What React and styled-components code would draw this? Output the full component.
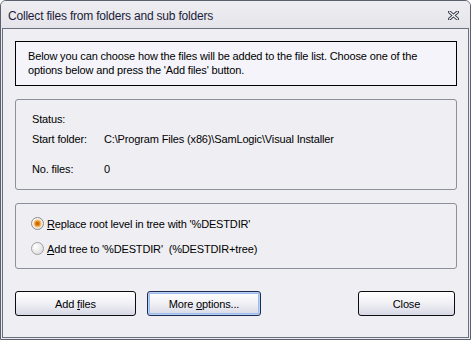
import React from 'react';
import styled, { createGlobalStyle, css } from 'styled-components';

const GlobalStyle = createGlobalStyle`
  html, body { margin: 0; padding: 0; background: #ffffff; }
  body { font-family: "Liberation Sans", Arial, sans-serif; }
  * { box-sizing: border-box; }
`;

const uiFont = css`
  font-family: "Liberation Sans", Arial, sans-serif;
  font-size: 11px;
  letter-spacing: -0.15px;
  color: #000;
`;

// --- Window frame --- //
const Window = styled.div`
  width: 471px;
  height: 340px;
  border: 1px solid #5a606c;
  border-radius: 6px 6px 0 0;
  background: #e8e8ee;
  display: flex;
  flex-direction: column;
  overflow: hidden;
`;

const TitleBar = styled.div`
  height: 27px;
  flex: none;
  display: flex;
  align-items: center;
  justify-content: space-between;
  padding: 0 11px 0 7px;
  background: linear-gradient(#eeeef2, #e4e4ea);
`;

const Title = styled.span`
  font-family: "Liberation Sans", Arial, sans-serif;
  font-size: 12px;
  letter-spacing: -0.2px;
  color: #1c1c3a;
  padding-top: 2px;
`;

const CloseGlyph = styled.svg`
  display: block;
  margin-top: 1px;
`;

const Client = styled.div`
  flex: 1;
  margin: 0 1px 1px 1px;
  border: 1px solid #6a707c;
  background: #efeef3;
  display: flex;
  flex-direction: column;
  padding: 12px 11px 0 12px;
`;

// --- Info box --- //
const InfoBox = styled.div`
  ${uiFont}
  height: 45px;
  border: 1px solid #000;
  background: #f4f4fa;
  padding: 7px 12px 0 12px;
  line-height: 14px;
`;

// --- Group boxes --- //
const Group = styled.div`
  height: ${p => p.$h}px;
  margin-top: 13px;
  border: 1px solid #8c909a;
  border-radius: 3px;
  padding: ${p => p.$pad};
  display: flex;
  flex-direction: column;
`;

const StatusRow = styled.div`
  ${uiFont}
  display: grid;
  grid-template-columns: 72px 1fr;
  line-height: 13px;
  margin-top: ${p => p.$top || 0}px;
`;

const RadioRow = styled.label`
  ${uiFont}
  display: flex;
  align-items: center;
  gap: 3px;
  height: 17px;
  margin-top: ${p => p.$top || 0}px;
`;

const Acc = styled.span`
  text-decoration: underline;
  text-underline-offset: 1px;
`;

// --- Buttons --- //
const ButtonBar = styled.div`
  display: flex;
  margin-top: 22px;
  padding-right: 2px;
`;

const Button = styled.button`
  ${uiFont}
  width: ${p => p.$w}px;
  height: 25px;
  margin-left: ${p => p.$ml || 0}px;
  border: 1px solid #0c0c10;
  border-radius: 3px;
  background: linear-gradient(#ffffff 0%, #f2f2f6 45%, #d8d8e6 100%);
  padding: 0;
  cursor: pointer;
  ${p => p.$focus && css`
    border-color: #1e2a50;
    box-shadow: inset 0 0 0 1px #b8d0f4, inset 0 0 0 2px #9cbcee;
  `}
  ${p => p.$push && css`margin-left: auto;`}
`;

const Radio = ({ checked }) => (
  <svg width="13" height="13" viewBox="0 0 13 13">
    <defs>
      <radialGradient id={checked ? 'rOn' : 'rOff'} cx="0.35" cy="0.35" r="0.8">
        <stop offset="0" stopColor="#ffffff" />
        <stop offset="1" stopColor={checked ? '#e4e2dc' : '#d8d8d8'} />
      </radialGradient>
    </defs>
    <circle cx="6.5" cy="6.5" r="6" fill={`url(#${checked ? 'rOn' : 'rOff'})`} stroke={checked ? '#8a8a8a' : '#a0a0a0'} strokeWidth="1" />
    {checked && <circle cx="6.5" cy="6.5" r="3.4" fill="#e48a20" stroke="#f6c070" strokeWidth="1.1" />}
    {checked && <circle cx="6.5" cy="6.5" r="1.6" fill="#c86400" />}
  </svg>
);

export default function App() {
  return (
    <>
      <GlobalStyle />
      <Window>
        <TitleBar>
          <Title>Collect files from folders and sub folders</Title>
          <CloseGlyph width="11" height="9" viewBox="0 0 11 9">
            <path d="M1.5 1 L9.5 8 M9.5 1 L1.5 8" stroke="#3c4050" strokeWidth="3.2" strokeLinecap="square" />
            <path d="M1.5 1 L9.5 8 M9.5 1 L1.5 8" stroke="#ffffff" strokeWidth="1.2" strokeLinecap="square" />
          </CloseGlyph>
        </TitleBar>
        <Client>
          <InfoBox>
            Below you can choose how the files will be added to the file list. Choose one of the
            <br />
            options below and press the 'Add files' button.
          </InfoBox>

          <Group $h={91} $pad="13px 16px 0 16px">
            <StatusRow>
              <span>Status:</span>
              <span></span>
            </StatusRow>
            <StatusRow $top={7}>
              <span>Start folder:</span>
              <span>{'C:\\Program Files (x86)\\SamLogic\\Visual Installer'}</span>
            </StatusRow>
            <StatusRow $top={17}>
              <span>No. files:</span>
              <span>0</span>
            </StatusRow>
          </Group>

          <Group $h={66} $pad="11px 15px 0 15px">
            <RadioRow>
              <Radio checked />
              <span><Acc>R</Acc>eplace root level in tree with '%DESTDIR'</span>
            </RadioRow>
            <RadioRow $top={8}>
              <Radio />
              <span><Acc>A</Acc>dd tree to '%DESTDIR'&nbsp; (%DESTDIR+tree)</span>
            </RadioRow>
          </Group>

          <ButtonBar>
            <Button $w={121}>Add <Acc>f</Acc>iles</Button>
            <Button $w={114} $ml={11} $focus>More <Acc>o</Acc>ptions...</Button>
            <Button $w={97} $push>Close</Button>
          </ButtonBar>
        </Client>
      </Window>
    </>
  );
}
